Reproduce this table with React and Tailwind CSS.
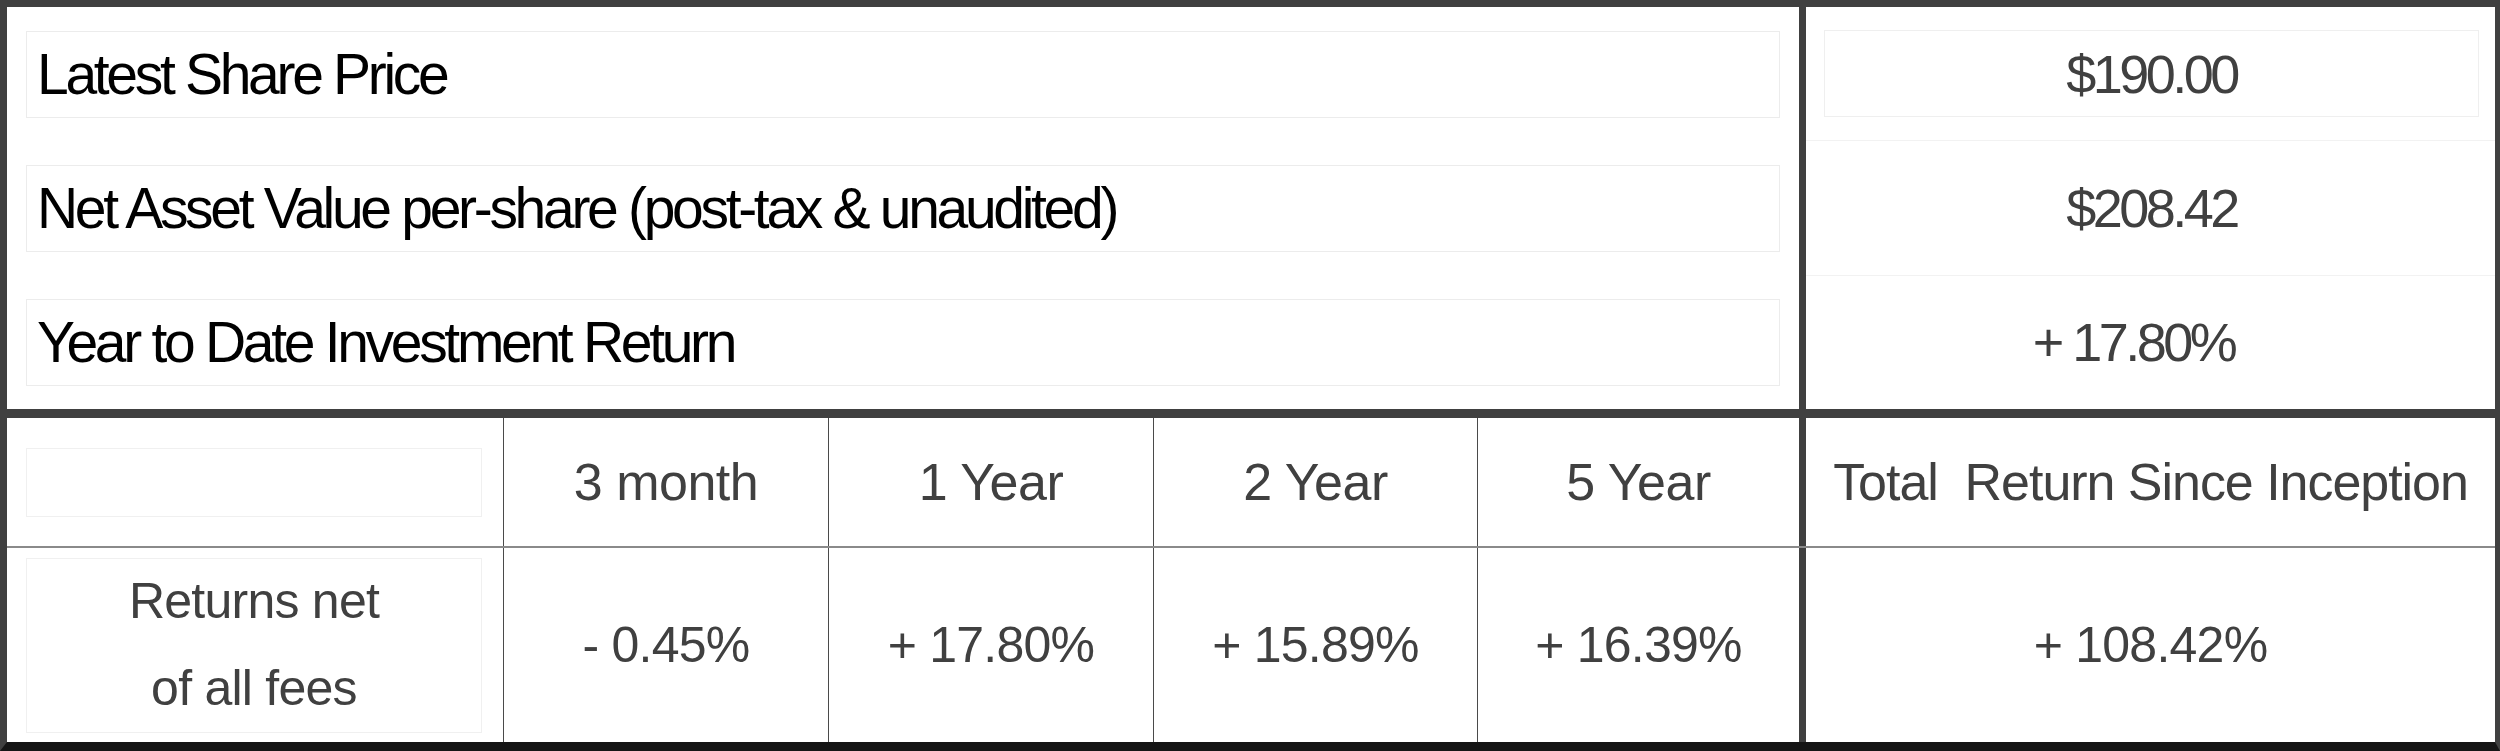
import React from "react";

const summary = [
  { label: "Latest Share Price", value: "$190.00", boxed: true },
  { label: "Net Asset Value per-share (post-tax & unaudited)", value: "$208.42" },
  { label: "Year to Date Investment Return", value: "+ 17.80%", shift: true },
];

const periods = [
  { head: "3 month", value: "- 0.45%", w: "w-[325px]" },
  { head: "1 Year", value: "+ 17.80%", w: "w-[325px]" },
  { head: "2 Year", value: "+ 15.89%", w: "w-[324px]" },
  { head: "5 Year", value: "+ 16.39%", w: "w-[322px]" },
];

export default function App() {
  return (
    <div className="w-[2500px] h-[751px] bg-white flex flex-col border-[#404040] border-t-[7px] border-l-[7px] border-r-[5px] border-b-[9px] border-b-[#151515] font-['Liberation_Sans',Arial,sans-serif] overflow-hidden">
      {/* Top summary */}
      <div className="flex h-[402px] shrink-0">
        <div className="w-[1792px] flex flex-col px-[19px]">
          {summary.map((row) => (
            <div key={row.label} className="flex-1 flex items-center">
              <div className="w-full h-[87px] border border-[#ececec] flex items-center pl-[10px] text-[57px] tracking-[-0.058em] text-black leading-none">
                {row.label}
              </div>
            </div>
          ))}
        </div>
        <div className="flex-1 flex flex-col border-l-[7px] border-[#404040]">
          {summary.map((row, i) => (
            <div
              key={row.value}
              className={`flex-1 flex items-center pl-[18px] pr-[16px] ${i > 0 ? "border-t border-[#f2f2f2]" : ""}`}
            >
              <div
                className={`w-full h-[87px] flex items-center justify-center text-[54px] tracking-[-0.065em] text-[#404040] leading-none ${row.boxed ? "border border-[#efefef]" : ""} ${row.shift ? "pr-[36px]" : ""}`}
              >
                {row.value}
              </div>
            </div>
          ))}
        </div>
      </div>

      {/* Period returns */}
      <div className="flex-1 flex flex-col border-t-[9px] border-[#404040] text-[50px] tracking-[-0.015em] text-[#404040] leading-none">
        <div className="flex h-[130px] border-b-2 border-[#8a8a8a] text-[52px] tracking-[-0.01em]">
          <div className="w-[496px] flex items-center pl-[19px] pr-[21px]">
            <div className="w-full h-[69px] border border-[#f0f0f0]" />
          </div>
          {periods.map((p) => (
            <div key={p.head} className={`${p.w} flex items-center justify-center border-l border-[#4a4a4a]`}>
              {p.head}
            </div>
          ))}
          <div className="flex-1 flex items-center justify-center border-l-[7px] border-[#404040] whitespace-pre tracking-[-0.02em]">
            {"Total  Return Since Inception"}
          </div>
        </div>
        <div className="flex flex-1">
          <div className="w-[496px] flex items-center pl-[19px] pr-[21px]">
            <div className="w-full h-[175px] border border-[#f0f0f0] flex flex-col items-center justify-center leading-[87px]">
              <span>Returns net</span>
              <span>of all fees</span>
            </div>
          </div>
          {periods.map((p) => (
            <div key={p.head} className={`${p.w} flex items-center justify-center border-l border-[#4a4a4a]`}>
              {p.value}
            </div>
          ))}
          <div className="flex-1 flex items-center justify-center border-l-[7px] border-[#404040]">
            + 108.42%
          </div>
        </div>
      </div>
    </div>
  );
}
